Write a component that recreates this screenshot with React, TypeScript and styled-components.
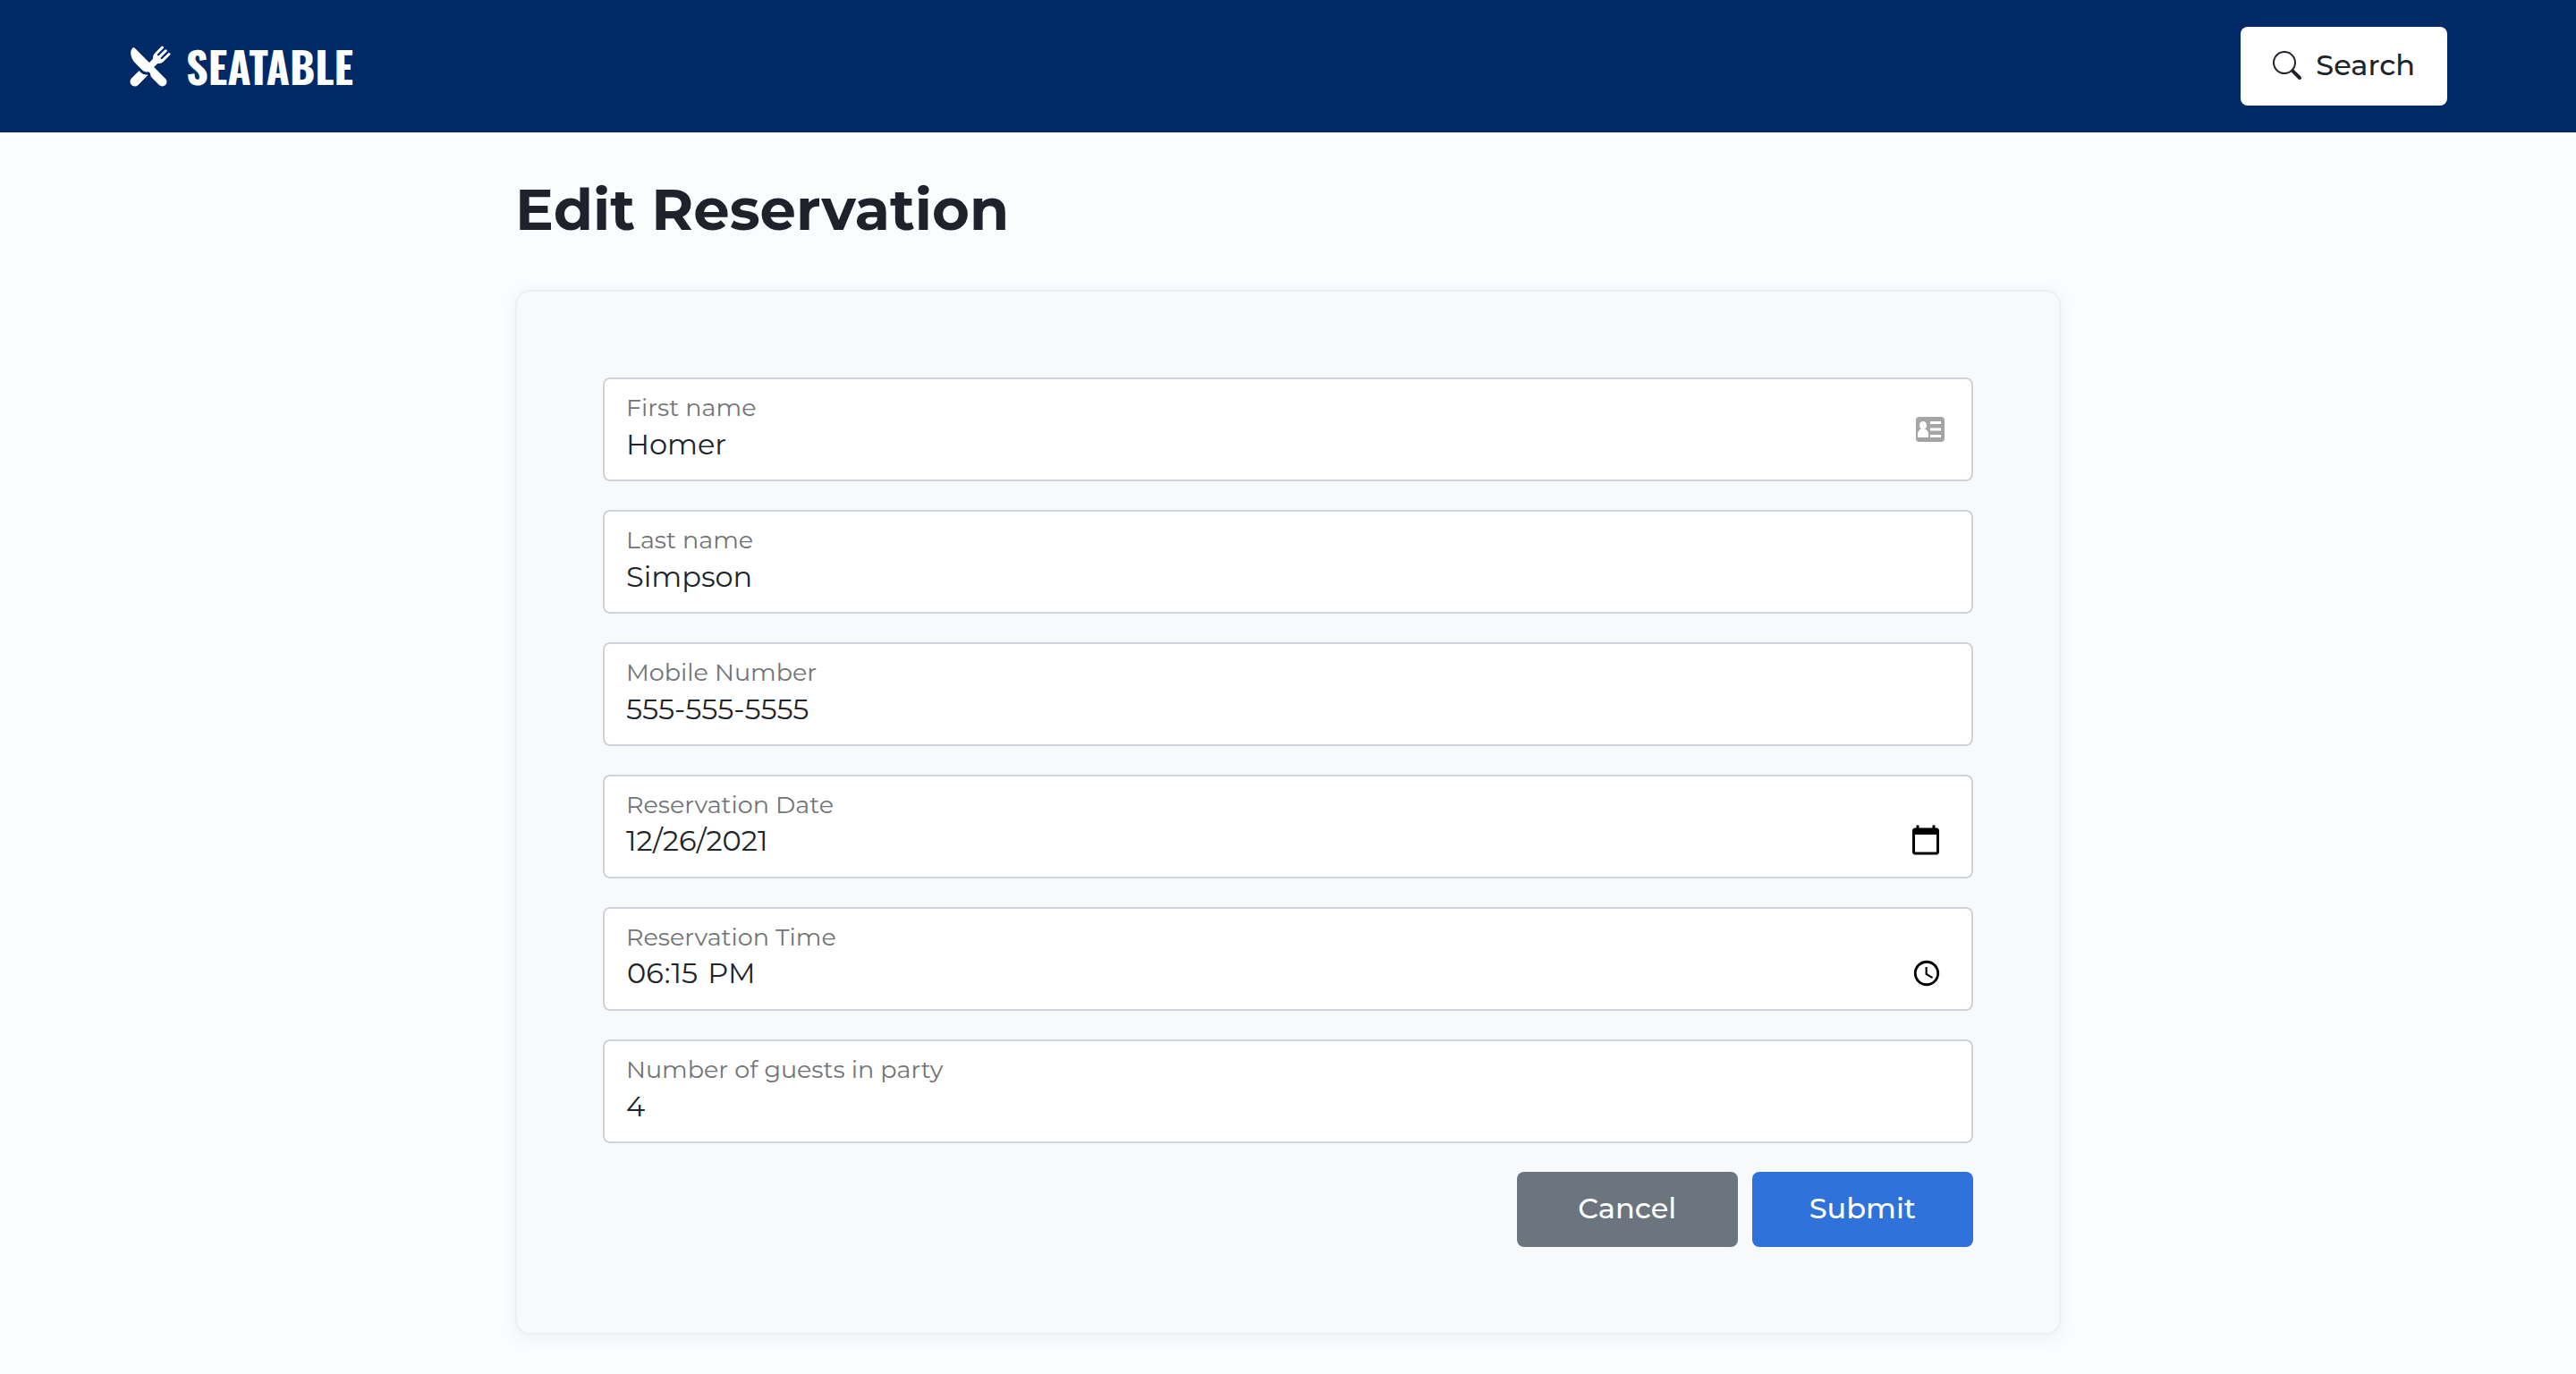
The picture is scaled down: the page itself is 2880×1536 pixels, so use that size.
import React from 'react';
import styled, { createGlobalStyle } from 'styled-components';
import { BsSearch } from 'react-icons/bs';
import { IoRestaurant } from 'react-icons/io5';

const GlobalStyle = createGlobalStyle`
  *, *::before, *::after { box-sizing: border-box; }
  body {
    margin: 0;
    background: #fbfcfe;
    color: #212529;
    font-family: Montserrat, Inter, sans-serif;
    font-size: 32px;
  }
  button, input { font: inherit; color: inherit; }
`;

const Header = styled.header`
  display: flex;
  align-items: center;
  justify-content: space-between;
  padding: 30px 144px;
  background: #002a66;
`;

const Brand = styled.a`
  display: flex;
  align-items: center;
  gap: 16px;
  color: #fff;
  font-family: Oswald, "Roboto Condensed", sans-serif;
  font-size: 48px;
  font-weight: 700;
  line-height: 56px;
  text-decoration: none;
`;

const SearchButton = styled.button`
  display: flex;
  align-items: center;
  gap: 16px;
  padding: 19px 36px 21px;
  border: 0;
  border-radius: 8px;
  background: #fff;
  font-weight: 500;
  line-height: 48px;
  cursor: pointer;
`;

const Main = styled.main`
  width: 60%;
  margin: 0 auto;
  padding: 48px 0 44px;
`;

const Title = styled.h1`
  margin: 0 0 52px;
  color: #1f222b;
  font-size: 64px;
  font-weight: 700;
  line-height: 76px;
`;

const Card = styled.form`
  display: flex;
  flex-direction: column;
  gap: 32px;
  padding: 96px;
  border: 2px solid #eff0f6;
  border-radius: 16px;
  background: #f8f9fb;
  box-shadow: 0 4px 20px rgba(0, 0, 0, 0.05);
`;

const Field = styled.div`
  display: flex;
  align-items: center;
  padding: 16px 30px 16px 24px;
  border: 2px solid #ced4da;
  border-radius: 8px;
  background: #fff;
  &:focus-within { border-color: #86b0ee; }
`;

const FieldBody = styled.div`
  display: flex;
  flex: 1;
  flex-direction: column;
`;

const Label = styled.label`
  color: #717476;
  font-size: 27px;
  line-height: 32px;
`;

const Input = styled.input`
  width: 100%;
  height: 48px;
  padding: 0;
  border: 0;
  outline: 0;
  background: transparent;

  &::-webkit-datetime-edit {
    padding-bottom: 2px;
  }

  &::-webkit-datetime-edit-month-field,
  &::-webkit-datetime-edit-day-field,
  &::-webkit-datetime-edit-year-field {
    padding: 0;
  }

  &::-webkit-datetime-edit-ampm-field {
    padding-left: 6px;
  }

  &[type='date']::-webkit-calendar-picker-indicator {
    width: 38px;
    height: 38px;
  }
`;

const Actions = styled.div`
  display: flex;
  justify-content: flex-end;
  gap: 16px;
`;

const ActionButton = styled.button<{ $tone: string }>`
  min-width: 247px;
  padding: 17px 64px 19px;
  border: 0;
  border-radius: 8px;
  background: ${(p) => p.$tone};
  color: #fff;
  font-weight: 500;
  line-height: 48px;
  cursor: pointer;
`;

function ContactIcon() {
  return (
    <svg width="32" height="28" viewBox="0 0 32 28" aria-hidden="true">
      <rect width="32" height="28" rx="4" fill="#a5a5a5" />
      <ellipse cx="8" cy="9.500" rx="4" ry="4.500" fill="#fff" />
      <path d="M2 23v-3c0-4 2-6 4-6.500h4c2 .5 4 2.500 4 6.500v3z" fill="#fff" />
      <path d="M16 5h12v3H16zM16 12.500h12v3H16zM16 20h12v3H16z" fill="#fff" />
    </svg>
  );
}

const fields = [
  { id: 'first_name', label: 'First name', type: 'text', value: 'Homer', contact: true },
  { id: 'last_name', label: 'Last name', type: 'text', value: 'Simpson' },
  { id: 'mobile_number', label: 'Mobile Number', type: 'tel', value: '555-555-5555' },
  { id: 'reservation_date', label: 'Reservation Date', type: 'date', value: '2021-12-26' },
  { id: 'reservation_time', label: 'Reservation Time', type: 'time', value: '18:15' },
  { id: 'people', label: 'Number of guests in party', type: 'number', value: '4' },
];

export default function App() {
  return (
    <>
      <GlobalStyle />
      <Header>
        <Brand href="#">
          <IoRestaurant size={48} aria-hidden="true" />
          SEATABLE
        </Brand>
        <SearchButton type="button">
          <BsSearch size={32} aria-hidden="true" />
          Search
        </SearchButton>
      </Header>
      <Main>
        <Title>Edit Reservation</Title>
        <Card onSubmit={(event) => event.preventDefault()}>
          {fields.map((field) => (
            <Field key={field.id}>
              <FieldBody>
                <Label htmlFor={field.id}>{field.label}</Label>
                <Input id={field.id} name={field.id} type={field.type} defaultValue={field.value} />
              </FieldBody>
              {field.contact && <ContactIcon />}
            </Field>
          ))}
          <Actions>
            <ActionButton type="button" $tone="#6c757d">Cancel</ActionButton>
            <ActionButton type="submit" $tone="#2f72db">Submit</ActionButton>
          </Actions>
        </Card>
      </Main>
    </>
  );
}
